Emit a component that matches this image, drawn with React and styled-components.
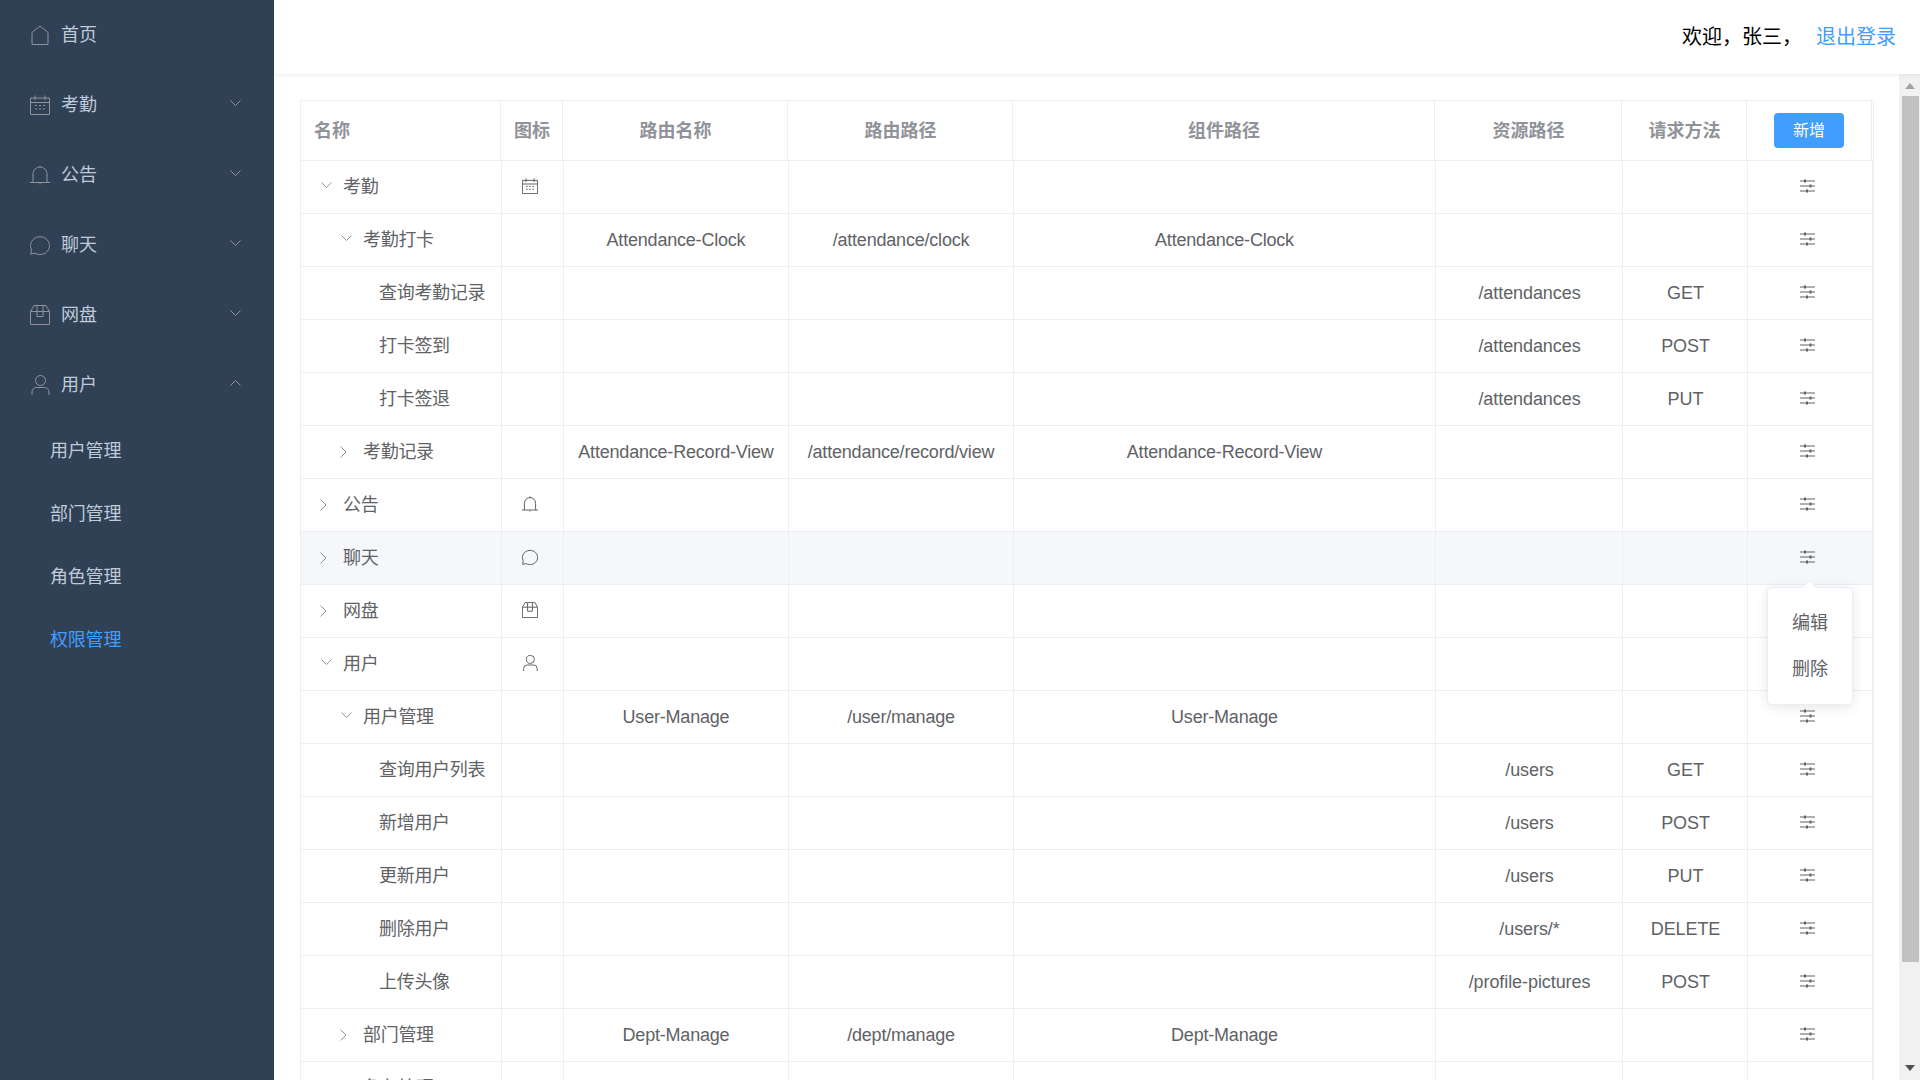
import styled, { createGlobalStyle } from "styled-components"

const GlobalStyle = createGlobalStyle`
html, body {
    margin: 0;
    height: 100%;
    overflow: hidden;
}
body {
    font-family: "Liberation Sans", "Noto Sans CJK SC", sans-serif;
    font-size: 18px;
    line-height: 1;
}
* {
    box-sizing: border-box;
}
`

const HouseIcon = () => (
    <svg viewBox="0 0 20 20" fill="none" stroke="currentColor">
        <path d="M2 19.5V7.5L10 1l8 6.5v12z" />
    </svg>
)

const DateIcon = () => (
    <svg viewBox="0 0 20 20" fill="none" stroke="currentColor">
        <path d="M.5 3h19v16.5H.5zM.5 7.5h19M5 .5V5M15 .5V5" />
        <path d="M5 10.5h2M9 10.5h2M13 10.5h2M5 14h2M9 14h2M13 14h2" />
    </svg>
)

const BellIcon = () => (
    <svg viewBox="0 0 20 20" fill="none" stroke="currentColor">
        <path d="M0 17.5h20M3 17.5V9a7 7 0 0 1 14 0v8.5M10 .5V2M10 18v1.5" />
    </svg>
)

const ChatIcon = () => (
    <svg viewBox="0 0 20 20" fill="none" stroke="currentColor">
        <path d="M.8 19.2l.7-4.6A9.5 8.9 0 1 1 5 18.2z" />
    </svg>
)

const BoxIcon = () => (
    <svg viewBox="0 0 20 20" fill="none" stroke="currentColor">
        <path d="M.5 6.5h19v13H.5zM.5 6.5L4 .5h12l3.500 6" />
        <path d="M7 1v10.500h6V1" />
    </svg>
)

const UserIcon = () => (
    <svg viewBox="0 0 20 20" fill="none" stroke="currentColor">
        <circle cx="10.500" cy="5.500" r="5" />
        <path d="M2 20v-3a4.500 4.500 0 0 1 4.500-4.500h8a4.500 4.500 0 0 1 4.500 4.500v3" />
    </svg>
)

const SlidersIcon = () => (
    <svg viewBox="0 0 15 14" fill="currentColor">
        <path d="M0 1.500h15v1H0zM0 6.500h15v1H0zM0 11.500h15v1H0z" />
        <path d="M4 .5h2v3H4zM9.500 5.500h2v3h-2zM6 10.500h2v3H6z" />
    </svg>
)

const Chevron = ({ dir }) => {
    const paths = {
        down: "M.5 .5l5 5 5-5",
        up: "M.5 5.500l5-5 5 5",
        right: "M.5 .5l5.500 5.500-5.500 5.500",
    }
    const box = dir === "right" ? "0 0 7 12" : "0 0 11 6"
    return (
        <ChevronSvg viewBox={box} $dir={dir} fill="none" stroke="currentColor" strokeWidth="1">
            <path d={paths[dir]} />
        </ChevronSvg>
    )
}

const menus = [
    { name: "首页", icon: <HouseIcon /> },
    { name: "考勤", icon: <DateIcon />, arrow: "down" },
    { name: "公告", icon: <BellIcon />, arrow: "down" },
    { name: "聊天", icon: <ChatIcon />, arrow: "down" },
    { name: "网盘", icon: <BoxIcon />, arrow: "down" },
    { name: "用户", icon: <UserIcon />, arrow: "up" },
]

const subMenus = [
    { name: "用户管理" },
    { name: "部门管理" },
    { name: "角色管理" },
    { name: "权限管理", active: true },
]

const titles = ["路由名称", "路由路径", "组件路径", "资源路径", "请求方法"]

const rows = [
    { name: "考勤", level: 0, open: true, icon: <DateIcon /> },
    { name: "考勤打卡", level: 1, open: true, route: "Attendance-Clock", path: "/attendance/clock", comp: "Attendance-Clock" },
    { name: "查询考勤记录", level: 2, res: "/attendances", method: "GET" },
    { name: "打卡签到", level: 2, res: "/attendances", method: "POST" },
    { name: "打卡签退", level: 2, res: "/attendances", method: "PUT" },
    { name: "考勤记录", level: 1, open: false, route: "Attendance-Record-View", path: "/attendance/record/view", comp: "Attendance-Record-View" },
    { name: "公告", level: 0, open: false, icon: <BellIcon /> },
    { name: "聊天", level: 0, open: false, icon: <ChatIcon />, hover: true },
    { name: "网盘", level: 0, open: false, icon: <BoxIcon /> },
    { name: "用户", level: 0, open: true, icon: <UserIcon /> },
    { name: "用户管理", level: 1, open: true, route: "User-Manage", path: "/user/manage", comp: "User-Manage" },
    { name: "查询用户列表", level: 2, res: "/users", method: "GET" },
    { name: "新增用户", level: 2, res: "/users", method: "POST" },
    { name: "更新用户", level: 2, res: "/users", method: "PUT" },
    { name: "删除用户", level: 2, res: "/users/*", method: "DELETE" },
    { name: "上传头像", level: 2, res: "/profile-pictures", method: "POST" },
    { name: "部门管理", level: 1, open: false, route: "Dept-Manage", path: "/dept/manage", comp: "Dept-Manage" },
    { name: "角色管理", level: 1, open: false, route: "Role-Manage", path: "/role/manage", comp: "Role-Manage" },
]

const App = () => {
    return (
        <Layout>
            <GlobalStyle />
            <Sidebar>
                {menus.map((m) => (
                    <MenuItem key={m.name}>
                        <MenuIcon>{m.icon}</MenuIcon>
                        <span>{m.name}</span>
                        {m.arrow && <MenuArrow><Chevron dir={m.arrow} /></MenuArrow>}
                    </MenuItem>
                ))}
                <SubMenu>
                    {subMenus.map((m) => (
                        <SubItem key={m.name} $active={m.active}>{m.name}</SubItem>
                    ))}
                </SubMenu>
            </Sidebar>
            <Main>
                <Header>
                    <Welcome>欢迎，张三，</Welcome>
                    <Logout>退出登录</Logout>
                </Header>
                <Body>
                    <Content>
                        <Table>
                            <HeadRow>
                                <HeadCell $left>名称</HeadCell>
                                <HeadCell>图标</HeadCell>
                                {titles.map((t) => <HeadCell key={t}>{t}</HeadCell>)}
                                <HeadCell><AddButton>新增</AddButton></HeadCell>
                            </HeadRow>
                            {rows.map((r) => (
                                <Row key={r.name} $hover={r.hover}>
                                    <NameCell $level={r.level}>
                                        {r.open !== undefined && (
                                            <Expander $level={r.level} $open={r.open}>
                                                <Chevron dir={r.open ? "down" : "right"} />
                                            </Expander>
                                        )}
                                        {r.name}
                                    </NameCell>
                                    <Cell><RowIcon>{r.icon}</RowIcon></Cell>
                                    <RouteCell>{r.route}</RouteCell>
                                    <RouteCell>{r.path}</RouteCell>
                                    <RouteCell>{r.comp}</RouteCell>
                                    <ResCell>{r.res}</ResCell>
                                    <ResCell>{r.method}</ResCell>
                                    <Cell><ActionIcon><SlidersIcon /></ActionIcon></Cell>
                                </Row>
                            ))}
                            <Dropdown>
                                <DropItem>编辑</DropItem>
                                <DropItem>删除</DropItem>
                            </Dropdown>
                        </Table>
                    </Content>
                    <ScrollTrack>
                        <ScrollUp />
                        <ScrollThumb />
                        <ScrollDown />
                    </ScrollTrack>
                </Body>
            </Main>
        </Layout>
    )
}

export default App

const Layout = styled.div`
display: flex;
height: 1080px;
overflow: hidden;
`
const Sidebar = styled.aside`
width: 274px;
flex-shrink: 0;
background: #304156;
`
const MenuItem = styled.div`
height: 70px;
display: flex;
align-items: center;
padding-left: 30px;
color: #bfcbd9;
`
const MenuIcon = styled.span`
width: 20px;
height: 20px;
margin-right: 11px;
color: #909399;
display: block;
svg {
    display: block;
    width: 20px;
    height: 20px;
}
`
const MenuArrow = styled.span`
margin-left: auto;
margin-right: 33px;
margin-top: -5px;
color: #909399;
display: flex;
`
const ChevronSvg = styled.svg`
display: block;
width: ${(p) => (p.$dir === "right" ? "7px" : "11px")};
height: ${(p) => (p.$dir === "right" ? "12px" : "6px")};
`
const SubMenu = styled.div`
display: flex;
flex-direction: column;
`
const SubItem = styled.div`
height: 62.8px;
display: flex;
align-items: center;
padding-left: 50px;
letter-spacing: -0.2px;
color: ${(p) => (p.$active ? "#409eff" : "#bfcbd9")};
`
const Main = styled.div`
flex: 1;
min-width: 0;
display: flex;
flex-direction: column;
`
const Header = styled.header`
height: 74px;
flex-shrink: 0;
display: flex;
justify-content: flex-end;
align-items: center;
padding-right: 24px;
background: #fff;
box-shadow: 0 1px 4px rgba(0, 21, 41, 0.08);
font-size: 20px;
position: relative;
z-index: 1;
`
const Welcome = styled.span`
color: #000;
margin-right: 14px;
`
const Logout = styled.a`
color: #409eff;
`
const Body = styled.div`
flex: 1;
min-height: 0;
display: flex;
`
const Content = styled.div`
flex: 1;
min-width: 0;
overflow: hidden;
padding: 26px 26px 0;
`
const Table = styled.div`
position: relative;
width: 1574px;
border-top: 1px solid #ebeef5;
border-left: 1px solid #ebeef5;
border-right: 1px solid #ebeef5;
color: #606266;
`
const HeadRow = styled.div`
display: grid;
grid-template-columns: 200px 62px 225px 225px 422px 187px 125px 125px 1px;
height: 60px;
border-bottom: 1px solid #ebeef5;
`
const HeadCell = styled.div`
display: flex;
align-items: center;
justify-content: ${(p) => (p.$left ? "flex-start" : "center")};
padding-left: ${(p) => (p.$left ? "13px" : "1px")};
border-right: 1px solid #ebeef5;
color: #909399;
font-weight: bold;
`
const AddButton = styled.button`
width: 70px;
height: 35px;
margin-left: -1px;
border: 0;
border-radius: 4px;
background: #409eff;
color: #fff;
font: inherit;
font-size: 16px;
font-weight: normal;
padding: 0;
`
const Row = styled.div`
display: grid;
grid-template-columns: 201px 62px 225px 225px 422px 187px 125px 125px;
height: 53px;
border-bottom: 1px solid #ebeef5;
background: ${(p) => (p.$hover ? "#f5f7fa" : "#fff")};
`
const Cell = styled.div`
display: flex;
align-items: center;
justify-content: center;
border-right: 1px solid #ebeef5;
white-space: nowrap;
`
const RouteCell = styled(Cell)`
letter-spacing: -0.2px;
`
const ResCell = styled(Cell)`
padding-left: 1px;
letter-spacing: -0.08px;
`
const NameCell = styled(Cell)`
position: relative;
justify-content: flex-start;
letter-spacing: -0.3px;
padding-left: ${(p) => (p.$level === 0 ? 42 : p.$level === 1 ? 62 : 78)}px;
`
const Expander = styled.span`
position: absolute;
left: ${(p) => (p.$level === 0 ? 20 : 40) - (p.$open ? 0 : 1)}px;
top: 50%;
transform: translateY(-50%);
margin-top: ${(p) => (p.$open ? "-2px" : "0")};
color: #909399;
display: flex;
`
const RowIcon = styled.span`
width: 16px;
height: 16px;
margin-top: -2px;
margin-right: 5px;
svg {
    display: block;
    width: 16px;
    height: 16px;
    stroke-width: 1.25;
}
`
const ActionIcon = styled.span`
width: 15px;
height: 14px;
margin-right: 5px;
margin-top: -2px;
color: #606266;
svg {
    display: block;
    width: 15px;
    height: 14px;
}
`
const Dropdown = styled.div`
position: absolute;
left: 1466px;
top: 486px;
width: 86px;
padding: 12.5px 0;
background: #fff;
border: 1px solid #ebeef5;
border-radius: 4px;
box-shadow: 0 2px 12px 0 rgba(0, 0, 0, 0.1);
&::before {
    content: "";
    position: absolute;
    left: 36px;
    top: -6px;
    width: 10px;
    height: 10px;
    background: #fff;
    border-top: 1px solid #ebeef5;
    border-left: 1px solid #ebeef5;
    transform: rotate(45deg);
}
`
const DropItem = styled.div`
height: 45.5px;
display: flex;
align-items: center;
justify-content: center;
`
const ScrollTrack = styled.div`
width: 21px;
flex-shrink: 0;
display: flex;
flex-direction: column;
align-items: center;
padding: 0 0 0 1px;
background: #f1f1f1;
`
const ScrollUp = styled.div`
flex-shrink: 0;
margin: 9px 0 7px;
width: 0;
height: 0;
border-left: 5px solid transparent;
border-right: 5px solid transparent;
border-bottom: 6px solid #a3a3a3;
`
const ScrollThumb = styled.div`
width: 17px;
height: 866px;
flex-shrink: 0;
background: #c1c1c1;
`
const ScrollDown = styled.div`
flex-shrink: 0;
margin-top: auto;
margin-bottom: 9px;
width: 0;
height: 0;
border-left: 5px solid transparent;
border-right: 5px solid transparent;
border-top: 6px solid #505050;
`
